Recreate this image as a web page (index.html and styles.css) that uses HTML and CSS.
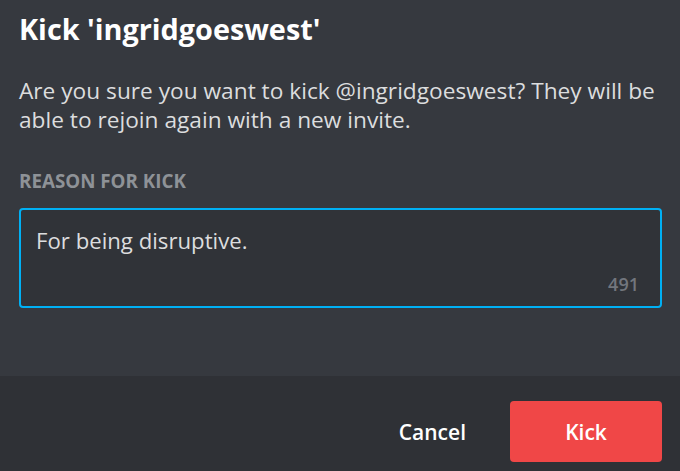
FILE: index.html
```html
<!DOCTYPE html>
<html lang="en">
<head>
    <meta charset="UTF-8">
    <meta name="viewport" content="width=device-width, initial-scale=1.0">
    <title>Kick member</title>
    <link rel="stylesheet" href="styles.css">
</head>
<body>
    <div class="modal">
        <div class="modal-content">
            <div class="heading">Kick 'ingridgoeswest'</div>
            <p class="message">Are you sure you want to kick @ingridgoeswest? They will be able to rejoin again with a new invite.</p>
            <label for="reason">Reason for kick</label>
            <div class="reason-box" id="reason">
                <div class="reason-text">For being disruptive.</div>
                <div class="counter">491</div>
            </div>
        </div>
        <div class="modal-footer">
            <button class="cancel">Cancel</button>
            <button class="kick">Kick</button>
        </div>
    </div>
</body>
</html>
```

FILE: styles.css
```css
body {
    font-family: "Open Sans", "Noto Sans", Arial, sans-serif;
    background-color: #36393f;
    margin: 0;
    padding: 0;
    height: 471px;
    overflow: hidden;
}
.modal {
    display: flex;
    flex-direction: column;
    height: 100%;
}
.modal-content {
    flex: 1;
    padding: 8px 18px 0 19px;
}
.heading {
    font-size: 28.8px;
    font-weight: 700;
    color: #fff;
    line-height: 42px;
}
.message {
    margin: 26px 0 0;
    font-size: 22.7px;
    line-height: 29px;
    color: #dcddde;
}
label {
    display: block;
    margin-top: 37px;
    font-size: 18.8px;
    font-weight: 700;
    text-transform: uppercase;
    color: #8e9297;
    line-height: 20px;
}
.reason-box {
    margin-top: 17px;
    height: 100px;
    box-sizing: border-box;
    border: 2px solid #00b0f4;
    border-radius: 4px;
    background-color: #303338;
    padding: 16px 21px 12px 15px;
    display: flex;
    flex-direction: column;
}
.reason-text {
    font-size: 22.2px;
    line-height: 30px;
    color: #dcddde;
}
.counter {
    margin-top: auto;
    align-self: flex-end;
    font-size: 18px;
    font-weight: 600;
    color: #72767d;
    line-height: 20px;
}
.modal-footer {
    background-color: #2f3136;
    height: 95px;
    box-sizing: border-box;
    padding: 25px 18px 0 0;
    display: flex;
    justify-content: flex-end;
    align-items: flex-start;
    gap: 24px;
}
.modal-footer button {
    font-family: inherit;
    font-size: 21px;
    font-weight: 600;
    color: #fff;
    border: none;
    height: 61px;
    border-radius: 4px;
    cursor: pointer;
}
.cancel {
    background: none;
    padding: 0 20px;
    font-size: 20px;
}
.kick {
    background-color: #f04747;
    width: 152px;
}
```
